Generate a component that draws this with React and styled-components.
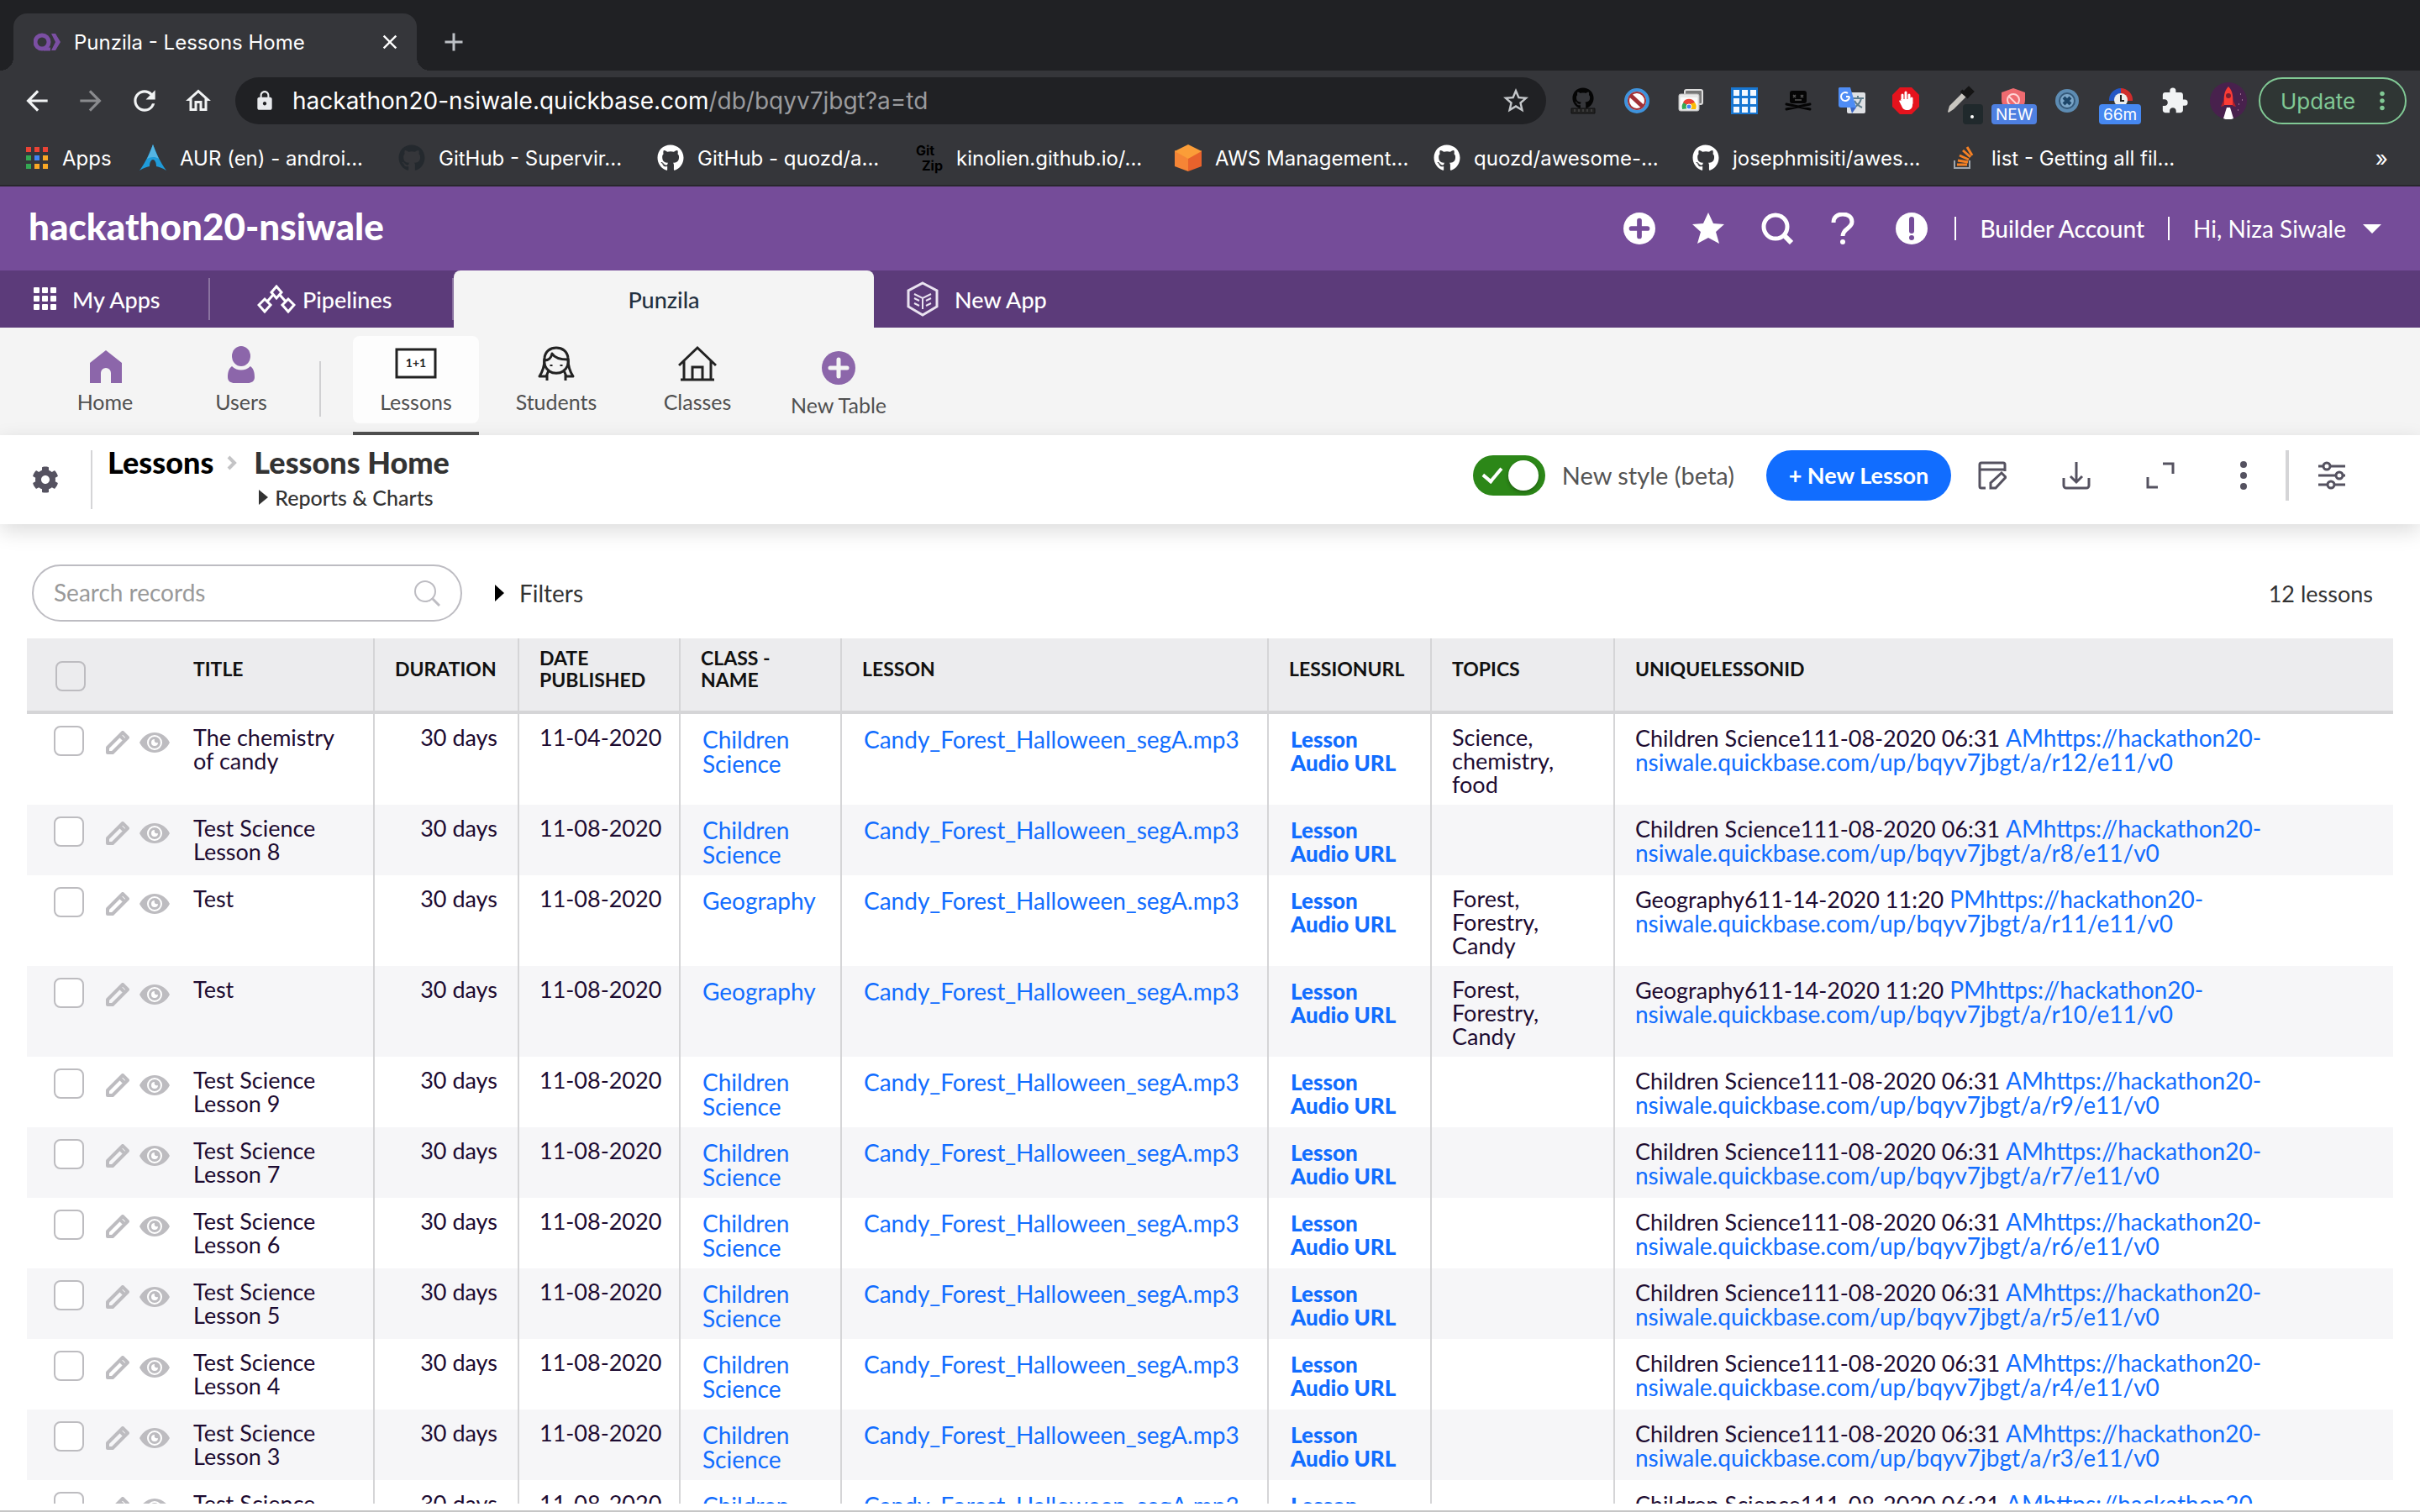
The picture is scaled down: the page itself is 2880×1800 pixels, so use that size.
import React from 'react';
import styled, { createGlobalStyle } from 'styled-components';
import { FaGithub, FaCog } from 'react-icons/fa';
import {
  MdArrowBack,
  MdArrowForward,
  MdRefresh,
  MdOutlineHome,
  MdLock,
  MdStarBorder,
  MdExtension,
  MdMoreVert,
  MdClose,
  MdAdd,
} from 'react-icons/md';

const GlobalStyle = createGlobalStyle`
  * {
    box-sizing: border-box;
  }
  body {
    margin: 0;
    background: #fff;
    font-family: Lato, "Open Sans", sans-serif;
  }
  button {
    border: 0;
    padding: 0;
    background: none;
    color: inherit;
    font: inherit;
    cursor: pointer;
  }
  a {
    color: inherit;
    text-decoration: none;
  }
  svg {
    display: block;
    flex: none;
  }
`;

const Page = styled.div`
  height: 100vh;
  display: flex;
  flex-direction: column;
  overflow: hidden;
  border-bottom: 2px solid #c6c6c6;
`;

/* ---------- browser chrome ---------- */

const Browser = styled.header`
  flex: none;
  background: #35363a;
  color: #fff;
  font-family: Inter, "Liberation Sans", sans-serif;
  border-bottom: 2px solid #28272c;
`;

const TabStrip = styled.div`
  height: 84px;
  padding: 16px 16px 0;
  display: flex;
  align-items: stretch;
  background: #202124;
`;

const BrowserTab = styled.div`
  position: relative;
  width: 480px;
  padding: 0 18px 0 24px;
  display: flex;
  align-items: center;
  gap: 16px;
  background: #35363a;
  border-radius: 16px 16px 0 0;
  font-size: 24px;
  &::before,
  &::after {
    content: '';
    position: absolute;
    bottom: 0;
    width: 16px;
    height: 16px;
  }
  &::before {
    left: -16px;
    background: radial-gradient(circle at 0 0, transparent 16px, #35363a 16px);
  }
  &::after {
    right: -16px;
    background: radial-gradient(circle at 100% 0, transparent 16px, #35363a 16px);
  }
`;

const BrowserTabTitle = styled.span`
  flex: 1;
  white-space: nowrap;
`;

const NewTabButton = styled.button`
  width: 88px;
  display: flex;
  align-items: center;
  justify-content: center;
  color: #bdc1c6;
`;

const Toolbar = styled.div`
  height: 72px;
  padding: 0 16px 0 12px;
  display: flex;
  align-items: center;
`;

const ToolButton = styled.button`
  position: relative;
  width: 64px;
  height: 56px;
  flex: none;
  display: flex;
  align-items: center;
  justify-content: center;
  color: ${props => props.$color || '#f1f3f4'};
`;

const AddressBar = styled.div`
  flex: 1;
  height: 56px;
  margin-left: 12px;
  margin-right: 12px;
  padding: 0 18px 0 22px;
  display: flex;
  align-items: center;
  gap: 20px;
  border-radius: 28px;
  background: #202124;
`;

const AddressText = styled.div`
  flex: 1;
  font-size: 28px;
  color: #9a9b9e;
  white-space: nowrap;
  span {
    color: #fff;
  }
`;

const ExtensionBadge = styled.span`
  position: absolute;
  bottom: 0;
  left: 6px;
  height: 24px;
  padding: 0 5px;
  border-radius: 4px;
  background: ${props => props.$bg};
  color: #fff;
  font-size: 19px;
  line-height: 25px;
`;

const UpdateButton = styled.button`
  width: 176px;
  height: 56px;
  margin-left: 4px;
  padding: 0 10px 0 24px;
  display: flex;
  align-items: center;
  justify-content: space-between;
  border: 2px solid #81c995;
  border-radius: 28px;
  background: #2f3634;
  color: #81c995;
  font-size: 26px;
`;

const Bookmarks = styled.nav`
  height: 64px;
  padding: 0 38px 0 30px;
  display: flex;
  align-items: center;
  font-size: 24px;
`;

const Bookmark = styled.a`
  width: ${props => props.$width || '308px'};
  flex: none;
  display: flex;
  align-items: center;
  gap: 16px;
  white-space: nowrap;
`;

const BookmarkMore = styled.button`
  margin-left: auto;
  font-size: 26px;
`;

const GitZip = styled.span`
  width: 32px;
  flex: none;
  display: flex;
  flex-direction: column;
  color: #000;
  font-size: 16px;
  font-weight: 700;
  line-height: 18px;
  span:last-child {
    align-self: flex-end;
  }
`;

/* ---------- app header ---------- */

const AppHeader = styled.div`
  flex: none;
  height: 100px;
  padding: 0 46px 0 34px;
  display: flex;
  align-items: center;
  background: #754c99;
  color: #fff;
`;

const AccountName = styled.h1`
  flex: 1;
  margin: 0;
  font-size: 44px;
  font-weight: 900;
  line-height: 48px;
  padding-bottom: 6px;
`;

const HeaderActions = styled.div`
  display: flex;
  align-items: center;
  gap: 44px;
  margin-right: 32px;
`;

const HeaderLink = styled.button`
  padding: 0 28px;
  display: flex;
  align-items: center;
  gap: 20px;
  border-left: 2px solid #fff;
  font-size: 28px;
  font-weight: ${props => props.$weight || 400};
  line-height: 28px;
  white-space: nowrap;
  &:last-child {
    padding-right: 0;
  }
`;

const AppTabs = styled.nav`
  flex: none;
  height: 68px;
  display: flex;
  align-items: center;
  background: #5c3b7a;
  color: #fff;
  font-size: 27px;
  font-weight: 500;
`;

const AppTab = styled.a`
  height: 50px;
  width: ${props => props.$width};
  padding-left: ${props => props.$pad};
  display: flex;
  align-items: center;
  gap: ${props => props.$gap || '18px'};
  border-right: ${props => (props.$last ? '0' : '2px solid #8a72a0')};
`;

const ActiveAppTab = styled.a`
  width: 500px;
  height: 68px;
  display: flex;
  align-items: center;
  justify-content: center;
  border-radius: 8px 8px 0 0;
  background: #f4f4f4;
  color: #22303f;
`;

/* ---------- table bar ---------- */

const TableBar = styled.nav`
  flex: none;
  height: 128px;
  padding-left: 50px;
  display: flex;
  background: #f4f4f4;
  color: #505050;
  font-size: 25px;
`;

const TableLink = styled.a`
  width: ${props => props.$width || '168px'};
  display: flex;
  flex-direction: column;
  align-items: center;
  padding-top: 20px;
  line-height: 32px;
  svg {
    margin-bottom: 4px;
  }
`;

const TableDivider = styled.div`
  width: 2px;
  height: 66px;
  margin: 40px 38px 0 6px;
  background: #d0d0d2;
`;

const ActiveTable = styled.a`
  width: 150px;
  margin: 10px 8px 0 0;
  display: flex;
  flex-direction: column;
  justify-content: space-between;
  border-bottom: 4px solid #505050;
`;

const ActiveTableTile = styled.span`
  height: 104px;
  padding-top: 10px;
  display: flex;
  flex-direction: column;
  align-items: center;
  gap: 4px;
  border-radius: 8px;
  background: #fdfdfd;
  line-height: 32px;
`;

/* ---------- page header ---------- */

const PageHeader = styled.div`
  position: relative;
  flex: none;
  height: 106px;
  padding: 0 80px 0 38px;
  display: flex;
  align-items: center;
  background: #fff;
  box-shadow: 0 8px 24px rgba(0, 0, 0, 0.14);
  color: #333;
`;

const SettingsButton = styled.button`
  width: 72px;
  height: 70px;
  display: flex;
  align-items: center;
  border-right: 2px solid #d5d5d7;
  color: #555260;
`;

const Breadcrumb = styled.div`
  flex: 1;
  align-self: flex-start;
  padding: 12px 0 0 18px;
  display: flex;
  gap: 16px;
`;

const Crumb = styled.h2`
  margin: 0;
  font-size: 36px;
  font-weight: 900;
  line-height: 40px;
  color: ${props => props.$color || '#333'};
`;

const CrumbArrow = styled.svg`
  margin: 12px 4px 0 0;
`;

const ReportsToggle = styled.button`
  padding: 0 6px;
  display: flex;
  align-items: center;
  gap: 8px;
  font-size: 25px;
  font-weight: 500;
  line-height: 44px;
`;

const StyleSwitch = styled.label`
  display: flex;
  align-items: center;
  gap: 20px;
  margin-right: 38px;
  padding-bottom: 10px;
  color: #555;
  font-size: 29px;
  line-height: 48px;
`;

const SwitchInput = styled.input`
  appearance: none;
  width: 86px;
  height: 48px;
  margin: 0;
  padding: 6px 8px;
  display: flex;
  justify-content: space-between;
  align-items: center;
  border-radius: 24px;
  background: #2c8718;
  &::before {
    content: '';
    width: 10px;
    height: 18px;
    margin: 0 0 6px 8px;
    border: solid #fff;
    border-width: 0 4px 4px 0;
    transform: rotate(40deg);
  }
  &::after {
    content: '';
    width: 36px;
    height: 36px;
    border-radius: 50%;
    background: #fff;
    box-shadow: 0 2px 4px rgba(0, 0, 0, 0.3);
  }
`;

const NewLessonButton = styled.button`
  width: 220px;
  height: 60px;
  margin: 0 18px 10px 0;
  padding-bottom: 2px;
  border-radius: 30px;
  background: #116dff;
  color: #fff;
  font-size: 27px;
  font-weight: 700;
`;

const IconButton = styled.button`
  width: ${props => props.$width || '100px'};
  height: 60px;
  margin-bottom: 10px;
  padding-left: ${props => props.$pad || '14px'};
  display: flex;
  align-items: center;
  border-left: ${props => (props.$divided ? '4px solid #d5d5d7' : '0')};
  color: #555260;
`;

/* ---------- report ---------- */

const FilterBar = styled.div`
  flex: none;
  padding: 48px 56px 20px 38px;
  display: flex;
  align-items: center;
  font-size: 28px;
  color: #333;
`;

const SearchBox = styled.label`
  width: 512px;
  height: 68px;
  padding: 0 24px;
  display: flex;
  align-items: center;
  border: 2px solid #bdbcc2;
  border-radius: 34px;
  background: #fff;
`;

const SearchInput = styled.input`
  flex: 1;
  min-width: 0;
  padding: 0 0 2px;
  border: 0;
  outline: 0;
  background: transparent;
  font: inherit;
  color: #333;
  &::placeholder {
    color: #999;
  }
`;

const FiltersToggle = styled.button`
  margin-left: 39px;
  display: flex;
  align-items: center;
  gap: 18px;
`;

const RecordCount = styled.div`
  margin-left: auto;
  font-size: 27px;
`;

const ReportArea = styled.main`
  flex: 1;
  min-height: 0;
  margin: 0 32px 8px;
  overflow: hidden;
`;

const ReportTable = styled.table`
  width: 100%;
  table-layout: fixed;
  border-collapse: separate;
  border-spacing: 0;
  color: #1d0b31;
  font-size: 27px;
  line-height: 28px;
`;

const HeadCell = styled.th`
  height: 90px;
  padding: 0 24px 14px ${props => (props.$flush ? '0' : '24px')};
  border-right: ${props => (props.$line ? '2px solid #d5d5d7' : '0')};
  border-bottom: 4px solid #d5d5d7;
  background: #ececee;
  color: #111;
  font-size: 23px;
  font-weight: 700;
  line-height: 26px;
  text-align: left;
`;

const Row = styled.tr`
  height: 84px;
  background: #fff;
  &:nth-child(even) {
    background: #f6f6f8;
  }
`;

const Cell = styled.td`
  padding: 14px 24px 10px ${props => (props.$flush ? '0' : '24px')};
  border-right: ${props => (props.$line ? '2px solid #d5d5d7' : '0')};
  vertical-align: top;
`;

const NumberCell = styled(Cell)`
  text-align: right;
`;

const DateCell = styled(Cell)`
  white-space: nowrap;
`;

const LinkCell = styled(Cell)`
  padding: 16px 24px 8px 26px;
`;

const RecordLink = styled.a`
  color: #116dff;
  font-size: ${props => (props.$bold ? '26px' : '28px')};
  font-weight: ${props => (props.$bold ? 900 : 400)};
`;

const ControlsCell = styled.td`
  padding: 14px 0 0 32px;
  vertical-align: top;
`;

const RowControls = styled.div`
  display: flex;
  align-items: center;
  color: #bdbcc0;
  button {
    padding-top: 4px;
  }
  button:first-of-type {
    margin: 0 12px 0 26px;
  }
`;

const Checkbox = styled.input`
  appearance: none;
  display: block;
  flex: none;
  width: 36px;
  height: 36px;
  margin: 0;
  border: 2px solid #bdbcc0;
  border-radius: 8px;
  background: ${props => (props.$clear ? 'transparent' : '#fff')};
`;

const HeadCheckbox = styled(Checkbox)`
  margin: 18px 0 0 34px;
`;

/* ---------- icons ---------- */

const QuickbaseMark = () => (
  <svg width="32" height="22" viewBox="0 0 32 22" fill="none" stroke="#7b4fa3">
    <circle cx="10" cy="11" r="8" strokeWidth="5" />
    <path d="M12 19.500h8" strokeWidth="4" />
    <path d="M21 1h5l6 10-6 10h-5l5-10z" fill="#7b4fa3" stroke="none" />
  </svg>
);

const AppsIcon = () => (
  <svg width="28" height="28" viewBox="0 0 28 28">
    {['#ea4335', '#ea4335', '#ea4335', '#34a853', '#4285f4', '#f9a825', '#34a853', '#f9a825', '#f9a825'].map((fill, i) => (
      <rect key={i} x={1 + (i % 3) * 10} y={1 + Math.floor(i / 3) * 10} width="6" height="6" fill={fill} />
    ))}
  </svg>
);

const ArchIcon = () => (
  <svg width="32" height="32" viewBox="0 0 32 32">
    <path d="M16 0c-4 10-8 20-16 31 5-3 8-4 12-5 0-5 2-8 4-8s4 3 4 8c4 1 7 2 12 5C24 20 20 10 16 0z" fill="#1f9bd9" />
    <path d="M16 0c-2 6-4 11-7 17 4-2 9-3 14 0-3-6-5-11-7-17z" fill="#55b5e3" />
  </svg>
);

const AwsIcon = () => (
  <svg width="32" height="32" viewBox="0 0 32 32">
    <path d="M0 7l16 9v16L0 26z" fill="#f58536" />
    <path d="M32 7l-16 9v16l16-6z" fill="#e8622c" />
    <path d="M16 0l16 8-16 9L0 8z" fill="#fb9d38" />
  </svg>
);

const StackIcon = () => (
  <svg width="32" height="28" viewBox="-2 0 32 28" fill="none">
    <path d="M2 17v9h18v-9" stroke="#9fa6ad" strokeWidth="2" />
    <path d="M5 22h12M6 17l12 2M8 11l11 5M12 5l9 8M17 1l6 10" stroke="#f48024" strokeWidth="3" />
  </svg>
);

const GithubRulerIcon = () => (
  <svg width="30" height="32" viewBox="0 0 30 32">
    <FaGithub x="2" y="0" size={26} color="#050505" />
    <path d="M1 25h28v6H1z" fill="#222" stroke="#111" />
    <path d="M5 26v3M10 26v3M15 26v3M20 26v3M25 26v3" stroke="#555" />
  </svg>
);

const BlockIcon = () => (
  <svg width="32" height="32" viewBox="0 0 32 32" fill="none">
    <circle cx="16" cy="16" r="13" fill="#fff" stroke="#3f93dc" strokeWidth="4" />
    <circle cx="16" cy="16" r="10" stroke="#a13137" strokeWidth="2" />
    <path d="M8 9l15 14" stroke="#a13137" strokeWidth="5" />
  </svg>
);

const RemoteDesktopIcon = () => (
  <svg width="30" height="28" viewBox="0 0 30 28">
    <rect x="8" y="1" width="21" height="17" rx="2" fill="#777" stroke="#ddd" strokeWidth="2" />
    <rect x="1" y="6" width="24" height="20" rx="2" fill="#e8e8e8" stroke="#bbb" />
    <path d="M3 10h20v14H3z" fill="#fafafa" />
    <path d="M5 24a8 8 0 0 1 3-9l5 8z" fill="#34a853" />
    <path d="M6 16a8 8 0 0 1 14 0l-7 4z" fill="#ea4335" />
    <path d="M20 16a8 8 0 0 1 1 8h-6l-1-6z" fill="#fbbc04" />
    <circle cx="13" cy="21" r="3" fill="#4285f4" stroke="#fff" />
  </svg>
);

const GridExtensionIcon = () => (
  <svg width="32" height="32" viewBox="0 0 32 32">
    <path d="M0 0h32v32H0z" fill="#1877d2" />
    {[0, 1, 2, 3, 4, 5, 6, 7, 8].map(i => (
      <rect key={i} x={3 + (i % 3) * 10} y={3 + Math.floor(i / 3) * 10} width="7" height="7" fill="#f4f9ff" />
    ))}
  </svg>
);

const PirateIcon = () => (
  <svg width="32" height="26" viewBox="0 0 32 26">
    <path d="M2 17l28 6M30 17L2 23" stroke="#050505" strokeWidth="3" strokeLinecap="round" />
    <rect x="6" y="1" width="20" height="15" rx="3" fill="#050505" />
    <path d="M10 6l3 3m0-3l-3 3M19 6l3 3m0-3l-3 3M12 12h8" stroke="#555" strokeWidth="1.500" />
  </svg>
);

const TranslateIcon = () => (
  <svg width="34" height="34" viewBox="0 0 34 34">
    <rect x="11" y="7" width="22" height="25" rx="2" fill="#dfe1e4" />
    <path d="M18 14h13M24 11v3M28 14c-1 5-5 9-8 11M20 17c2 4 5 6 9 8" stroke="#5f7d8c" strokeWidth="2" fill="none" />
    <path d="M2 1h13l7 24H4a3 3 0 0 1-3-3V2z" fill="#4f8df5" />
    <path d="M15 25h7l-5 7z" fill="#3b66c4" />
    <path d="M14 12h-4M14 12a5 5 0 1 1-2-4" stroke="#fff" strokeWidth="2" fill="none" />
  </svg>
);

const StopHandIcon = () => (
  <svg width="32" height="32" viewBox="0 0 32 32">
    <path d="M9 0h14l9 9v14l-9 9H9l-9-9V9z" fill="#e5131d" />
    <path d="M12 17V9M16 16V6M20 17V9M23 19v-6" stroke="#fff" strokeWidth="3" strokeLinecap="round" />
    <path d="M10 14h14v7c0 4-3 6-6 6-4 0-6-2-7-5l-3-6c2-1 3 0 4 2z" fill="#fff" />
  </svg>
);

const PickerIcon = () => (
  <svg width="56" height="56" viewBox="0 0 56 56">
    <path d="M14 41l2-7 16-16 5 4-16 16-6 4z" fill="#c9c6c0" />
    <path d="M30 16l9 8M34 18l5-5 4 4-5 5z" stroke="#151515" strokeWidth="4" fill="#151515" />
    <rect x="32" y="32" width="24" height="24" rx="4" fill="#20292c" />
    <circle cx="43" cy="47" r="2" fill="#fff" />
  </svg>
);

const ShieldIcon = () => (
  <svg width="30" height="32" viewBox="0 0 30 32" fill="none">
    <path d="M15 1l14 5v9c0 8-6 13-14 16C7 28 1 23 1 15V6z" fill="#ef6b70" />
    <circle cx="15" cy="15" r="7" stroke="#ffd5d5" strokeWidth="2" />
    <path d="M10 11l9 9" stroke="#ffd5d5" strokeWidth="2" />
  </svg>
);

const CrossRingIcon = () => (
  <svg width="32" height="32" viewBox="0 0 32 32" fill="none">
    <circle cx="16" cy="16" r="14" fill="#5d8cb3" />
    <circle cx="16" cy="16" r="9" fill="#7ba6c8" stroke="#35597a" strokeWidth="2" />
    <path d="M12 12l8 8m0-8l-8 8" stroke="#1d4669" strokeWidth="4" />
  </svg>
);

const ClockIcon = () => (
  <svg width="30" height="32" viewBox="0 0 30 32" fill="none">
    <path d="M15 1a14 14 0 0 0-14 15h14z" fill="#2457c5" />
    <path d="M15 1a14 14 0 0 1 14 15H15z" fill="#d02c2c" />
    <circle cx="15" cy="15" r="8" fill="#eee" />
    <path d="M15 9v7h4" stroke="#222" strokeWidth="2" />
  </svg>
);

const RocketAvatar = () => (
  <svg width="44" height="44" viewBox="0 0 44 44">
    <circle cx="22" cy="22" r="22" fill="#48214d" />
    <path d="M22 5c-5 5-6 12-5 22h10c1-10 0-17-5-22z" fill="#fb3b35" />
    <path d="M17 20l-4 9 4-1zM27 20l4 9-4-1z" fill="#b31f2c" />
    <circle cx="22" cy="16" r="3" fill="#7d1f31" />
    <path d="M20 30h4l4 13c-4 2-8 2-12 0z" fill="#fff" />
    <path d="M36 14h1M34 26h1M38 21h1M33 33h1" stroke="#e5b4d8" strokeWidth="1" />
  </svg>
);

const PlusCircle = ({ fill, cross }) => (
  <svg width="38" height="38" viewBox="0 0 40 40">
    <circle cx="20" cy="20" r="20" fill={fill} />
    <path d="M20 10v20M10 20h20" stroke={cross} strokeWidth="6" strokeLinecap="round" />
  </svg>
);

const StarIcon = () => (
  <svg width="38" height="38" viewBox="0 0 38 38">
    <path d="M19 0l6 13 13 1-10 9 4 14-13-7-13 7 4-14L0 14l13-1z" fill="#fff" />
  </svg>
);

const SearchBoldIcon = () => (
  <svg width="38" height="38" viewBox="0 0 38 38" fill="none" stroke="#fff">
    <circle cx="17" cy="17" r="14" strokeWidth="5" />
    <path d="M27 27l9 9" strokeWidth="6" />
  </svg>
);

const QuestionIcon = () => (
  <svg width="34" height="38" viewBox="4 0 34 38" fill="none" stroke="#fff">
    <path d="M8 12C8 5 13 2 19 2s11 3 11 9c0 8-11 8-11 17" strokeWidth="5" />
    <circle cx="19" cy="35" r="3" fill="#fff" stroke="none" />
  </svg>
);

const AlertIcon = () => (
  <svg width="38" height="38" viewBox="0 0 38 38">
    <circle cx="19" cy="19" r="19" fill="#fff" />
    <path d="M19 8v14" stroke="#754c99" strokeWidth="6" strokeLinecap="round" />
    <circle cx="19" cy="30" r="3" fill="#754c99" />
  </svg>
);

const Caret = ({ down, width, height, fill }) => (
  <svg width={width} height={height} viewBox="0 0 10 10" preserveAspectRatio="none">
    <path d={down ? 'M0 0h10L5 10z' : 'M0 0l10 5-10 5z'} fill={fill} />
  </svg>
);

const DotsGridIcon = () => (
  <svg width="28" height="28" viewBox="0 0 28 28" fill="#fff">
    {[0, 1, 2, 3, 4, 5, 6, 7, 8].map(i => (
      <rect key={i} x={(i % 3) * 10} y={Math.floor(i / 3) * 10} width="7" height="7" rx="1" />
    ))}
  </svg>
);

const PipelinesIcon = () => (
  <svg width="46" height="34" viewBox="0 0 46 34" fill="none" stroke="#fff" strokeWidth="3">
    <path d="M23 2l6 7-6 7-6-7zM9 17l7 7-7 8-7-8zM37 17l7 7-7 8-7-8zM19 12l-7 8M27 12l7 8" />
  </svg>
);

const CubeIcon = () => (
  <svg width="40" height="42" viewBox="0 0 40 42" fill="none" stroke="#e9e2f0" strokeWidth="3">
    <path d="M20 2l17 9v19l-17 10L3 30V11z" />
    <path d="M10 15l10 5 10-5M20 20v13M10 20l6 3M10 26l6 3M24 23l6-3M24 29l6-3" strokeWidth="2" />
  </svg>
);

const HomeSolidIcon = () => (
  <svg width="40" height="48" viewBox="0 0 40 48" fill="#8c66aa">
    <path d="M21 7l19 15v24H27V34a6 6 0 0 0-12 0v12H2V22z" />
  </svg>
);

const UserSolidIcon = () => (
  <svg width="36" height="48" viewBox="0 0 36 48" fill="#8c66aa">
    <ellipse cx="18" cy="14" rx="11" ry="12" />
    <path d="M7 26c6 6 16 6 22 0 4 3 5 8 5 13 0 5-4 7-8 7H10c-4 0-8-2-8-7 0-5 1-10 5-13z" />
  </svg>
);

const BoardIcon = () => (
  <svg width="50" height="48" viewBox="0 0 50 48">
    <rect x="2" y="6" width="46" height="33" fill="#fff" stroke="#222" strokeWidth="3" />
    <text x="25" y="27" fontSize="14" fontWeight="700" fontFamily="Lato, sans-serif" textAnchor="middle" fill="#222">
      1+1
    </text>
  </svg>
);

const StudentIcon = () => (
  <svg width="44" height="48" viewBox="0 0 44 48" fill="none" stroke="#222" strokeWidth="3" strokeLinejoin="round">
    <path d="M14 32c-6-4-7-10-6-16C9 8 15 4 22 4s13 4 14 12c1 6 0 12-6 16-4 3-12 3-16 0z" />
    <path d="M8 19c5 0 8-3 9-8 3 5 10 7 19 7" />
    <path d="M8 17c0 9-2 15-6 21h8l3-7M36 17c0 9 2 15 6 21h-8l-3-7M11 36v7M33 36v7" />
    <path d="M16 24v2M28 24v2" />
  </svg>
);

const ClassIcon = () => (
  <svg width="46" height="48" viewBox="0 0 46 48" fill="none" stroke="#222" strokeWidth="3">
    <path d="M1 25L23 4l22 21M7 20v21M39 20v21M3 42h40M17 42V27h12v15" />
  </svg>
);

const FormEditIcon = () => (
  <svg width="34" height="34" viewBox="0 0 34 34" fill="none" stroke="currentColor" strokeWidth="3">
    <path d="M9 32H4a2 2 0 0 1-2-2V4a2 2 0 0 1 2-2h26a2 2 0 0 1 2 2v6H2M32 8v4" />
    <path d="M15 32v-6l13-12 5 5-12 13z" />
  </svg>
);

const DownloadIcon = () => (
  <svg width="34" height="34" viewBox="0 0 34 34" fill="none" stroke="currentColor" strokeWidth="3">
    <path d="M2 20v9a3 3 0 0 0 3 3h24a3 3 0 0 0 3-3v-9M17 1v23M10 18l7 7 7-7" />
  </svg>
);

const ExpandIcon = () => (
  <svg width="34" height="34" viewBox="0 0 34 34" fill="none" stroke="currentColor" strokeWidth="3">
    <path d="M20 3h12v12M2 19v12h12" />
  </svg>
);

const KebabIcon = () => (
  <svg width="8" height="34" viewBox="0 0 8 34" fill="currentColor">
    <circle cx="4" cy="4" r="4" />
    <circle cx="4" cy="17" r="4" />
    <circle cx="4" cy="30" r="4" />
  </svg>
);

const SlidersIcon = () => (
  <svg width="34" height="34" viewBox="0 0 34 34" fill="none" stroke="currentColor" strokeWidth="3">
    <path d="M1 6h6M15 6h18M1 17h21M30 17h3M1 28h11M20 28h13" />
    <circle cx="11" cy="6" r="4" />
    <circle cx="26" cy="17" r="4" />
    <circle cx="16" cy="28" r="4" />
  </svg>
);

const SearchThinIcon = () => (
  <svg width="32" height="32" viewBox="0 0 32 32" fill="none" stroke="#bdbcc2" strokeWidth="2">
    <circle cx="14" cy="14" r="12" />
    <path d="M22 22l9 9" strokeWidth="3" />
  </svg>
);

const PencilIcon = () => (
  <svg width="28" height="28" viewBox="0 0 28 28" fill="none" stroke="currentColor" strokeWidth="4">
    <path d="M2 26v-6L20 2l6 6L8 26zM17 6l5 5" strokeLinejoin="round" />
  </svg>
);

const EyeIcon = () => (
  <svg width="36" height="24" viewBox="0 0 36 24">
    <path d="M0 12C8-4 28-4 36 12 28 28 8 28 0 12z" fill="currentColor" />
    <circle cx="18" cy="12" r="8" fill="none" stroke="#fff" strokeWidth="2" />
    <path d="M18 8a4 4 0 1 0 4 4c-3 1-5-1-4-4z" fill="#fff" />
  </svg>
);

/* ---------- data ---------- */

const bookmarks = [
  { label: 'AUR (en) - androi...', icon: <ArchIcon /> },
  { label: 'GitHub - Supervir...', icon: <FaGithub size={32} color="#24292e" /> },
  { label: 'GitHub - quozd/a...', icon: <FaGithub size={32} /> },
  {
    label: 'kinolien.github.io/...',
    icon: (
      <GitZip>
        <span>Git</span>
        <span>Zip</span>
      </GitZip>
    ),
  },
  { label: 'AWS Management...', icon: <AwsIcon /> },
  { label: 'quozd/awesome-...', icon: <FaGithub size={32} /> },
  { label: 'josephmisiti/awes...', icon: <FaGithub size={32} /> },
  { label: 'list - Getting all fil...', icon: <StackIcon /> },
];

const extensions = [
  { name: 'GitHub size', icon: <GithubRulerIcon /> },
  { name: 'Blocker', icon: <BlockIcon /> },
  { name: 'Remote desktop', icon: <RemoteDesktopIcon /> },
  { name: 'Grid', icon: <GridExtensionIcon /> },
  { name: 'Pirate', icon: <PirateIcon /> },
  { name: 'Translate', icon: <TranslateIcon /> },
  { name: 'Ad block', icon: <StopHandIcon /> },
  { name: 'Color picker', icon: <PickerIcon /> },
  { name: 'Shield', icon: <ShieldIcon />, badge: 'NEW', bg: '#4e80e1' },
  { name: 'Ring', icon: <CrossRingIcon /> },
  { name: 'Clock', icon: <ClockIcon />, badge: '66m', bg: '#4688f1' },
];

const columns = [
  { label: '', width: '198px' },
  { label: 'TITLE', width: '216px', flush: true, line: true },
  { label: 'DURATION', width: '172px', line: true },
  { label: 'DATE PUBLISHED', width: '192px', line: true },
  { label: 'CLASS - NAME', width: '192px', line: true },
  { label: 'LESSON', width: '508px', line: true },
  { label: 'LESSIONURL', width: '194px', line: true },
  { label: 'TOPICS', width: '218px', line: true },
  { label: 'UNIQUELESSONID' },
];

const science = (title, record, extra) => ({
  title,
  date: '11-08-2020',
  className: 'Children Science',
  topics: '',
  uid: 'Children Science111-08-2020 06:31 ',
  link: `AMhttps://hackathon20-nsiwale.quickbase.com/up/bqyv7jbgt/a/${record}/e11/v0`,
  ...extra,
});

const geography = record => ({
  title: 'Test',
  date: '11-08-2020',
  className: 'Geography',
  topics: 'Forest, Forestry, Candy',
  uid: 'Geography611-14-2020 11:20 ',
  link: `PMhttps://hackathon20-nsiwale.quickbase.com/up/bqyv7jbgt/a/${record}/e11/v0`,
});

const lessons = [
  science('The chemistry of candy', 'r12', { date: '11-04-2020', topics: 'Science, chemistry, food' }),
  science('Test Science Lesson 8', 'r8'),
  geography('r11'),
  geography('r10'),
  science('Test Science Lesson 9', 'r9'),
  science('Test Science Lesson 7', 'r7'),
  science('Test Science Lesson 6', 'r6'),
  science('Test Science Lesson 5', 'r5'),
  science('Test Science Lesson 4', 'r4'),
  science('Test Science Lesson 3', 'r3'),
  science('Test Science Lesson 2', 'r2'),
];

/* ---------- sections ---------- */

const BrowserChrome = () => (
  <Browser>
    <TabStrip>
      <BrowserTab>
        <QuickbaseMark />
        <BrowserTabTitle>Punzila - Lessons Home</BrowserTabTitle>
        <button aria-label="Close tab">
          <MdClose size={28} />
        </button>
      </BrowserTab>
      <NewTabButton aria-label="New tab">
        <MdAdd size={36} />
      </NewTabButton>
    </TabStrip>
    <Toolbar>
      <ToolButton aria-label="Back"><MdArrowBack size={38} /></ToolButton>
      <ToolButton aria-label="Forward" $color="#8a8b8e"><MdArrowForward size={38} /></ToolButton>
      <ToolButton aria-label="Reload"><MdRefresh size={38} /></ToolButton>
      <ToolButton aria-label="Home"><MdOutlineHome size={36} /></ToolButton>
      <AddressBar>
        <MdLock size={26} color="#e8eaed" />
        <AddressText>
          <span>hackathon20-nsiwale.quickbase.com</span>/db/bqyv7jbgt?a=td
        </AddressText>
        <MdStarBorder size={36} color="#c4c7ca" />
      </AddressBar>
      {extensions.map(ext => (
        <ToolButton key={ext.name} aria-label={ext.name}>
          {ext.icon}
          {ext.badge && <ExtensionBadge $bg={ext.bg}>{ext.badge}</ExtensionBadge>}
        </ToolButton>
      ))}
      <ToolButton aria-label="Extensions"><MdExtension size={34} /></ToolButton>
      <ToolButton aria-label="Profile"><RocketAvatar /></ToolButton>
      <UpdateButton>
        Update
        <MdMoreVert size={34} />
      </UpdateButton>
    </Toolbar>
    <Bookmarks>
      <Bookmark href="#" $width="136px">
        <AppsIcon />
        Apps
      </Bookmark>
      {bookmarks.map(item => (
        <Bookmark key={item.label} href="#">
          {item.icon}
          {item.label}
        </Bookmark>
      ))}
      <BookmarkMore aria-label="More bookmarks">»</BookmarkMore>
    </Bookmarks>
  </Browser>
);

const QuickbaseHeader = () => (
  <>
    <AppHeader>
      <AccountName>hackathon20-nsiwale</AccountName>
      <HeaderActions>
        <button aria-label="Create"><PlusCircle fill="#fff" cross="#754c99" /></button>
        <button aria-label="Favorites"><StarIcon /></button>
        <button aria-label="Search"><SearchBoldIcon /></button>
        <button aria-label="Help"><QuestionIcon /></button>
        <button aria-label="Alerts"><AlertIcon /></button>
      </HeaderActions>
      <HeaderLink $weight={500}>Builder Account</HeaderLink>
      <HeaderLink>
        Hi, Niza Siwale
        <Caret down width="22" height="11" fill="#fff" />
      </HeaderLink>
    </AppHeader>
    <AppTabs>
      <AppTab href="#" $width="250px" $pad="40px">
        <DotsGridIcon />
        My Apps
      </AppTab>
      <AppTab href="#" $width="290px" $pad="56px" $gap="8px">
        <PipelinesIcon />
        Pipelines
      </AppTab>
      <ActiveAppTab href="#">Punzila</ActiveAppTab>
      <AppTab href="#" $width="250px" $pad="38px" $last>
        <CubeIcon />
        New App
      </AppTab>
    </AppTabs>
  </>
);

const Tables = () => (
  <TableBar>
    <TableLink href="#" $width="150px">
      <HomeSolidIcon />
      Home
    </TableLink>
    <TableLink href="#" $width="174px">
      <UserSolidIcon />
      Users
    </TableLink>
    <TableDivider />
    <ActiveTable href="#">
      <ActiveTableTile>
        <BoardIcon />
        Lessons
      </ActiveTableTile>
    </ActiveTable>
    <TableLink href="#">
      <StudentIcon />
      Students
    </TableLink>
    <TableLink href="#">
      <ClassIcon />
      Classes
    </TableLink>
    <TableLink href="#">
      <svg width="40" height="52" viewBox="0 0 40 52">
        <circle cx="20" cy="28" r="20" fill="#8c66aa" />
        <path d="M20 18v20M10 28h20" stroke="#f4f4f4" strokeWidth="5" strokeLinecap="round" />
      </svg>
      New Table
    </TableLink>
  </TableBar>
);

const LessonsHeader = () => (
  <PageHeader>
    <SettingsButton aria-label="Settings">
      <FaCog size={32} />
    </SettingsButton>
    <Breadcrumb>
      <Crumb $color="#000">Lessons</Crumb>
      <CrumbArrow width="12" height="18" viewBox="0 0 12 18" fill="none" stroke="#c4c4c6" strokeWidth="4">
        <path d="M2 2l7 7-7 7" />
      </CrumbArrow>
      <div>
        <Crumb>Lessons Home</Crumb>
        <ReportsToggle>
          <Caret width="11" height="18" fill="#333" />
          Reports &amp; Charts
        </ReportsToggle>
      </div>
    </Breadcrumb>
    <StyleSwitch>
      <SwitchInput type="checkbox" role="switch" defaultChecked />
      New style (beta)
    </StyleSwitch>
    <NewLessonButton>+ New Lesson</NewLessonButton>
    <IconButton aria-label="Edit form"><FormEditIcon /></IconButton>
    <IconButton aria-label="Download"><DownloadIcon /></IconButton>
    <IconButton aria-label="Full screen"><ExpandIcon /></IconButton>
    <IconButton aria-label="More" $pad="26px" $width="80px"><KebabIcon /></IconButton>
    <IconButton aria-label="Customize" $pad="34px" $width="80px" $divided><SlidersIcon /></IconButton>
  </PageHeader>
);

const LessonRow = ({ lesson }) => (
  <Row>
    <ControlsCell>
      <RowControls>
        <Checkbox type="checkbox" aria-label={`Select ${lesson.title}`} />
        <button aria-label="Edit"><PencilIcon /></button>
        <button aria-label="View"><EyeIcon /></button>
      </RowControls>
    </ControlsCell>
    <Cell $flush $line>{lesson.title}</Cell>
    <NumberCell $line>30 days</NumberCell>
    <DateCell $line>{lesson.date}</DateCell>
    <LinkCell $line>
      <RecordLink href="#">{lesson.className}</RecordLink>
    </LinkCell>
    <LinkCell $line>
      <RecordLink href="#">Candy_Forest_Halloween_segA.mp3</RecordLink>
    </LinkCell>
    <LinkCell $line>
      <RecordLink href="#" $bold>Lesson Audio URL</RecordLink>
    </LinkCell>
    <Cell $line>{lesson.topics}</Cell>
    <Cell>
      {lesson.uid}
      <RecordLink href="#">{lesson.link}</RecordLink>
    </Cell>
  </Row>
);

const App = () => (
  <Page>
    <GlobalStyle />
    <BrowserChrome />
    <QuickbaseHeader />
    <Tables />
    <LessonsHeader />
    <FilterBar>
      <SearchBox>
        <SearchInput type="text" placeholder="Search records" aria-label="Search records" />
        <SearchThinIcon />
      </SearchBox>
      <FiltersToggle>
        <Caret width="11" height="20" fill="#000" />
        Filters
      </FiltersToggle>
      <RecordCount>12 lessons</RecordCount>
    </FilterBar>
    <ReportArea>
      <ReportTable>
        <colgroup>
          {columns.map(col => (
            <col key={col.label} style={{ width: col.width }} />
          ))}
        </colgroup>
        <thead>
          <tr>
            {columns.map(col => (
              <HeadCell key={col.label} $flush={!col.label || col.flush} $line={col.line}>
                {col.label || <HeadCheckbox type="checkbox" $clear aria-label="Select all" />}
              </HeadCell>
            ))}
          </tr>
        </thead>
        <tbody>
          {lessons.map(lesson => (
            <LessonRow key={lesson.link} lesson={lesson} />
          ))}
        </tbody>
      </ReportTable>
    </ReportArea>
  </Page>
);

export default App;
